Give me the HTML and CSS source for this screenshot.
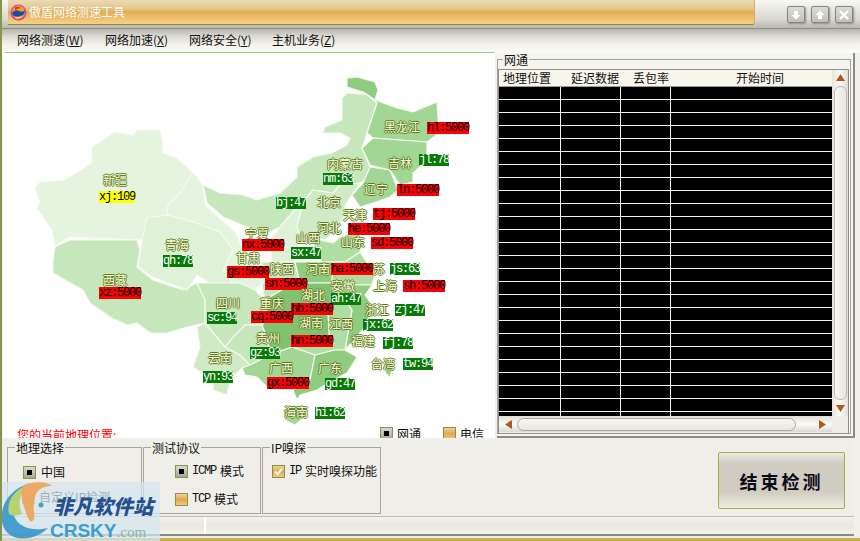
FILE: index.html
```html
<!DOCTYPE html>
<html lang="zh">
<head>
<meta charset="utf-8">
<title>傲盾网络测速工具</title>
<link rel="stylesheet" href="styles.css">
</head>
<body>
<div class="app">
  <header class="titlebar">
    <div class="banner">
      <svg class="app-icon" width="17" height="17" viewBox="0 0 17 17"><circle cx="8.5" cy="8.5" r="8" fill="#d040c0"/><circle cx="8.5" cy="8" r="6.6" fill="#f0a020"/><path d="M2 9q3-4 7-2t6-1q0 3-2 5-5 3-9 1-2-1-2-3z" fill="#1a4fa0"/><path d="M5 3q3-1 6 1-3 0-6 2z" fill="#e03020"/><path d="M4 13q4 1 9-1-3 3-6 3z" fill="#ffe040"/></svg>
      <span class="app-title">傲盾网络测速工具</span>
    </div>
    <div class="win-buttons">
      <button class="win-btn"><svg width="10" height="10" viewBox="0 0 10 10"><path d="M3 1h4v4h2.500L5 9.500.5 5H3z" fill="#fff"/></svg></button>
      <button class="win-btn"><svg width="10" height="10" viewBox="0 0 10 10"><path d="M3 9h4V5h2.500L5 .5.500 5H3z" fill="#fff"/></svg></button>
      <button class="win-btn"><svg width="10" height="10" viewBox="0 0 10 10"><path d="M1 1l8 8M9 1L1 9" stroke="#fff" stroke-width="2.400"/></svg></button>
    </div>
  </header>

  <nav class="menubar">
    <span class="menu-item m1">网络测速(<u>W</u>)</span>
    <span class="menu-item m2">网络加速(<u>X</u>)</span>
    <span class="menu-item m3">网络安全(<u>Y</u>)</span>
    <span class="menu-item m4">主机业务(<u>Z</u>)</span>
  </nav>

  <main class="main">
    <section class="stage">
      <div class="canvas">
        <svg class="map" width="500" height="440" viewBox="0 0 500 440">
          <g stroke="#f4faf0" stroke-width="1.200" stroke-linejoin="round">
            <path class="c1" d="M35 188L40 182 65 180 73 175 92 163 92 147 115 132 133 135 137 130 160 130 163 143 162 153 177 158 192 172 193 182 180 193 168 205 167 215 147 218 145 240 90 238 70 237 55 245 52 230 37 208 40 202z"/>
            <path class="c3" d="M55 247L70 240 87 240 137 240 140 250 137 267 153 280 183 290 197 283 205 300 205 323 187 327 167 333 150 333 137 323 127 325 110 317 90 303 83 290 53 273 53 260z"/>
            <path class="c1" d="M193 172L203 185 205 205 235 232 243 250 250 262 262 262 265 280 255 290 240 283 233 285 223 270 233 250 220 232 193 222 167 215 168 205 180 193z"/>
            <path class="c1b" d="M147 218L167 215 193 222 220 232 233 250 223 270 233 283 210 283 197 275 187 290 153 277 138 267 142 240z"/>
            <path class="c3" d="M342 98L347 93 373 95 377 103 367 133 362 148 370 167 373 177 360 183 340 185 333 193 313 190 303 202 297 207 280 227 268 233 247 227 223 217 207 203 203 185 220 193 243 195 257 200 280 193 297 177 297 167 313 157 332 153 347 145 350 138 340 133 323 133 325 127 342 120 342 107z"/>
            <path class="c6" d="M347 78L357 77 375 82 378 90 375 100 363 92 347 87z"/>
            <path class="c5" d="M363 92L375 100 397 108 413 112 437 102 439 133 427 142 400 140 373 138 367 133 377 103z"/>
            <path class="c5" d="M373 138L400 140 427 142 427 155 422 165 413 173 413 182 400 185 390 170 370 165 362 148z"/>
            <path class="c5" d="M370 167L390 170 398 190 390 197 373 203 360 207 352 195 363 183z"/>
            <path class="c2" d="M333 193L340 185 360 183 352 195 345 205 345 215 335 232 325 240 310 235 300 240 297 225 303 203 313 190z"/>
            <path class="c1b" d="M297 207L303 203 297 225 300 240 295 262 272 262 270 240 280 227z"/>
            <path class="c4" d="M320 240L333 243 340 237 357 233 363 243 360 252 345 262 322 262 310 236z"/>
            <path class="c3" d="M262 262L272 262 295 262 300 283 290 285 265 300 262 285 265 280z"/>
            <path class="c6" d="M295 262L322 262 333 262 332 283 300 283z"/>
            <path class="c4" d="M333 262L345 262 360 252 375 275 372 285 352 285 345 300 335 300 332 283z"/>
            <path class="c6" d="M352 285L372 285 365 295 372 305 367 325 345 350 352 310 345 300z"/>
            <path class="c7" d="M265 300L290 285 300 283 332 283 335 300 328 312 290 315 268 318z"/>
            <path class="c3" d="M197 283L210 283 233 283 240 283 255 290 265 300 262 325 245 325 235 340 225 347 215 335 205 323 205 300z"/>
            <path class="c2" d="M193 367L200 347 197 327 205 323 215 335 225 347 240 355 250 365 242 368 230 380 227 395 213 390 213 380z"/>
            <path class="c3" d="M225 347L235 335 245 325 262 325 268 340 270 355 250 365 240 355z"/>
            <path class="c7" d="M268 318L290 315 328 312 330 345 292 347 270 355 268 340 262 325z"/>
            <path class="c4" d="M328 312L335 300 345 300 352 310 345 350 335 350 315 355 292 347 330 345z"/>
            <path class="c5" d="M242 368L250 365 270 355 292 347 315 355 310 380 293 390 267 387 257 377 245 375z"/>
            <path class="c6" d="M315 355L335 350 345 350 357 357 347 373 333 380 317 390 300 395 297 400 293 390 310 380z"/>
            <path class="c5" d="M283 410L295 405 307 408 307 415 295 425 285 420z"/>
            <path class="c6" d="M385 362L393 362 390 378 385 372z"/>
          </g>
        </svg>

        <span class="name" id="n-xj">新疆</span><span class="tag yellow" id="t-xj">xj:109</span>
        <span class="name" id="n-qh">青海</span><span class="tag green" id="t-qh">qh:78</span>
        <span class="name" id="n-xz">西藏</span><span class="tag red" id="t-xz">xz:5000</span>
        <span class="name" id="n-hl">黑龙江</span><span class="tag red" id="t-hl">hl:5000</span>
        <span class="name" id="n-jl">吉林</span><span class="tag green" id="t-jl">jl:78</span>
        <span class="name" id="n-nm">内蒙古</span><span class="tag green" id="t-nm">nm:63</span>
        <span class="name" id="n-ln">辽宁</span><span class="tag red" id="t-ln">ln:5000</span>
        <span class="name" id="n-bj">北京</span><span class="tag green" id="t-bj">bj:47</span>
        <span class="name" id="n-tj">天津</span><span class="tag red" id="t-tj">tj:5000</span>
        <span class="name" id="n-he">河北</span><span class="tag red" id="t-he">he:5000</span>
        <span class="name" id="n-sd">山东</span><span class="tag red" id="t-sd">sd:5000</span>
        <span class="name" id="n-nx">宁夏</span><span class="tag red" id="t-nx">nx:5000</span>
        <span class="name" id="n-sx">山西</span><span class="tag green" id="t-sx">sx:47</span>
        <span class="name" id="n-gs">甘肃</span><span class="tag red" id="t-gs">gs:5000</span>
        <span class="name" id="n-sn">陕西</span><span class="tag red" id="t-sn">sn:5000</span>
        <span class="name" id="n-ha">河南</span><span class="tag red" id="t-ha">ha:5000</span>
        <span class="name" id="n-js">苏</span><span class="tag green" id="t-js">js:63</span>
        <span class="name" id="n-ah">安徽</span><span class="tag green" id="t-ah">ah:47</span>
        <span class="name" id="n-sh">上海</span><span class="tag red" id="t-sh">sh:5000</span>
        <span class="name" id="n-hb">湖北</span><span class="tag red" id="t-hb">hb:5000</span>
        <span class="name" id="n-sc">四川</span><span class="tag green" id="t-sc">sc:94</span>
        <span class="name" id="n-cq">重庆</span><span class="tag red" id="t-cq">cq:5000</span>
        <span class="name" id="n-zj">浙江</span><span class="tag green" id="t-zj">zj:47</span>
        <span class="name" id="n-hn">湖南</span><span class="tag red" id="t-hn">hn:5000</span>
        <span class="name" id="n-jx">江西</span><span class="tag green" id="t-jx">jx:62</span>
        <span class="name" id="n-fj">福建</span><span class="tag green" id="t-fj">fj:78</span>
        <span class="name" id="n-gz">贵州</span><span class="tag green" id="t-gz">gz:93</span>
        <span class="name" id="n-yn">云南</span><span class="tag green" id="t-yn">yn:93</span>
        <span class="name" id="n-tw">台湾</span><span class="tag green" id="t-tw">tw:94</span>
        <span class="name" id="n-gx">广西</span><span class="tag red" id="t-gx">gx:5000</span>
        <span class="name" id="n-gd">广东</span><span class="tag green" id="t-gd">gd:47</span>
        <span class="name" id="n-hi">海南</span><span class="tag green" id="t-hi">hi:62</span>

        <span class="location">您的当前地理位置:</span>
        <span class="legend-item lg1"><i class="box dot"></i>网通</span>
        <span class="legend-item lg2"><i class="box tan"></i>电信</span>
      </div>
    </section>

    <section class="net">
      <span class="caption net-caption">网通</span>
      <div class="net-inner">
        <div class="table">
          <div class="thead">
            <span class="th th1">地理位置</span>
            <span class="th th2">延迟数据</span>
            <span class="th th3">丢包率</span>
            <span class="th th4">开始时间</span>
          </div>
          <div class="tbody"></div>
        </div>
        <div class="vscroll">
          <svg class="arrow" width="9" height="7" viewBox="0 0 9 7"><path d="M4.500 0L9 7H0z" fill="#b5561c"/></svg>
          <div class="vthumb"></div>
          <svg class="arrow" width="9" height="7" viewBox="0 0 9 7"><path d="M4.500 7L9 0H0z" fill="#b5561c"/></svg>
        </div>
        <div class="hscroll">
          <svg class="arrow" width="7" height="9" viewBox="0 0 7 9"><path d="M0 4.500L7 0V9z" fill="#b5561c"/></svg>
          <div class="hthumb"></div>
          <svg class="arrow" width="7" height="9" viewBox="0 0 7 9"><path d="M7 4.500L0 0V9z" fill="#b5561c"/></svg>
        </div>
      </div>
    </section>
  </main>

  <section class="controls">
    <div class="group g1">
      <span class="caption">地理选择</span>
      <label class="opt o-cn"><i class="box dot"></i>中国</label>
      <label class="opt o-ip"><i class="box tan"></i>自定义IP检测</label>
    </div>
    <div class="group g2">
      <span class="caption">测试协议</span>
      <label class="opt o-icmp"><i class="box dot"></i><span class="mono">ICMP</span>模式</label>
      <label class="opt o-tcp"><i class="box tan"></i><span class="mono">TCP</span>模式</label>
    </div>
    <div class="group g3">
      <span class="caption">IP嗅探</span>
      <label class="opt o-sniff"><i class="box tan check"><svg width="11" height="11" viewBox="0 0 11 11"><path d="M2 5.500l2.500 2.500L9 3" fill="none" stroke="#fff" stroke-width="2"/></svg></i><span class="mono">IP</span>实时嗅探功能</label>
    </div>
    <button class="stop">结束检测</button>
  </section>

  <footer class="status"><div class="status-a"></div><div class="status-b"></div></footer>
  <div class="bottom-strip"></div>

  <div class="watermark">
    <svg class="wm-logo" width="56" height="59" viewBox="0 0 56 59">
      <path d="M2 40C0 24 8 8 30 1 16 8 10 22 14 34 18 44 30 50 48 46 34 60 6 62 2 40z" fill="#2f93c8"/>
      <path d="M9 32C6 20 14 7 30 2 20 10 17 22 22 32 16 34 12 34 9 32z" fill="#b3cf5a"/>
      <path d="M22 5C32-2 48 0 52 4 40 4 32 10 34 30 36 40 30 42 28 36 24 26 20 14 22 5z" fill="#f0a050"/>
      <circle cx="41" cy="23" r="2.500" fill="#2f93c8"/>
    </svg>
    <span class="wm-cn">非凡软件站</span>
    <span class="wm-en">CRSKY<span class="wm-com">.com</span></span>
  </div>
</div>
</body>
</html>
```

FILE: styles.css
```css
* { box-sizing: border-box; }
html, body { margin: 0; padding: 0; }
body {
  width: 860px;
  height: 541px;
  overflow: hidden;
  font-family: "Noto Sans CJK SC", "Liberation Sans", sans-serif;
  font-size: 12px;
  color: #111;
  background: #f0eee9;
}
.app {
  position: relative;
  width: 860px;
  height: 541px;
  display: flex;
  flex-direction: column;
  border-left: 2px solid #84964a;
  overflow: hidden;
  background: #f2f0eb;
}

/* title bar */
.titlebar {
  height: 28px;
  flex: none;
  display: flex;
  justify-content: space-between;
  background: linear-gradient(#f8f8f4, #d8d7d0 70%, #b9b8b0);
  padding-left: 6px;
}
.banner {
  width: 747px;
  height: 25px;
  display: flex;
  align-items: center;
  gap: 2px;
  padding-left: 2px;
  background: linear-gradient(#ebdab8 0, #e5c88c 35%, #dfb050 50%, #eebb68 70%, #fbcd86 100%);
  border-bottom: 1px solid #7e8f3c;
  border-right: 1px solid #d6ae6c;
  border-bottom-right-radius: 3px;
}
.app-icon { flex: none; }
.app-title { color: #fff; margin-left: 0; text-shadow: 0 0 1px #c99d50; line-height: 12px; font-size: 12px; }
.win-buttons { display: flex; gap: 6px; padding: 6px 7px 0 0; }
.win-btn {
  width: 18px;
  height: 17px;
  padding: 0;
  display: flex;
  align-items: center;
  justify-content: center;
  border: 1px solid #86857f;
  border-radius: 2px;
  background: linear-gradient(#dedcd5, #c1bfb8);
  box-shadow: 1px 1px 2px #8e8d88;
}

/* menu bar */
.menubar {
  height: 25px;
  flex: none;
  position: relative;
  background: linear-gradient(#b5b3aa 0, #dcdad2 30%, #f6f5f0 70%, #fafaf7 100%);
  border-top: 1px solid #8d8c85;
}
.menu-item { position: absolute; top: 3px; font-size: 12px; line-height: 16px; white-space: nowrap; }
.m1 { left: 15px; }
.m2 { left: 103px; }
.m3 { left: 187px; }
.m4 { left: 270px; }
.menubar::after {
  content: "";
  position: absolute;
  left: 3px;
  width: 489px;
  bottom: 0;
  height: 1px;
  background: #93d277;
}

/* main row */
.main { height: 386px; flex: none; display: flex; padding-left: 1px; }
.stage {
  position: relative;
  width: 492px;
  height: 385px;
  background: #fff;
  overflow: hidden;
  flex: none;
}
.canvas { position: absolute; left: -3px; top: -53px; width: 500px; height: 500px; }
.map { position: absolute; left: 0; top: 0; }
.c1 { fill: #e5f4de; }
.c1b { fill: #dff1d7; }
.c2 { fill: #cfeac4; }
.c3 { fill: #c6e6bb; }
.c4 { fill: #afdea2; }
.c5 { fill: #a2d695; }
.c6 { fill: #90cc80; }
.c7 { fill: #80c270; }

.name {
  position: absolute;
  font-size: 12px;
  line-height: 12px;
  white-space: nowrap;
  color: #fbfde0;
  text-shadow: 1px 0 0 #5f7a18, -1px 0 0 #5f7a18, 0 1px 0 #5f7a18, 0 -1px 0 #5f7a18;
}
.tag {
  position: absolute;
  height: 12px;
  padding: 0;
  font-family: "Liberation Mono", monospace;
  font-size: 12px;
  letter-spacing: -1.2px;
  line-height: 12px;
  white-space: nowrap;
}
.red { background: #fb0000; color: #000; width: 42px; }
.green { background: #087a08; color: #fff; width: 30px; }
.yellow { background: #ffff00; color: #000; width: 36px; }

#n-xj { left: 103px; top: 174px; } #t-xj { left: 99px; top: 191px; }
#n-qh { left: 165px; top: 239px; } #t-qh { left: 163px; top: 255px; }
#n-xz { left: 103px; top: 274px; } #t-xz { left: 99px; top: 287px; }
#n-hl { left: 384px; top: 121px; } #t-hl { left: 427px; top: 122px; }
#n-jl { left: 388px; top: 157px; } #t-jl { left: 419px; top: 154px; }
#n-nm { left: 327px; top: 158px; } #t-nm { left: 323px; top: 173px; }
#n-ln { left: 364px; top: 183px; } #t-ln { left: 397px; top: 184px; }
#n-bj { left: 317px; top: 196px; } #t-bj { left: 276px; top: 197px; }
#n-tj { left: 343px; top: 209px; } #t-tj { left: 373px; top: 208px; }
#n-he { left: 317px; top: 222px; } #t-he { left: 348px; top: 223px; }
#n-sd { left: 341px; top: 236px; } #t-sd { left: 371px; top: 237px; }
#n-nx { left: 245px; top: 228px; } #t-nx { left: 242px; top: 239px; }
#n-sx { left: 296px; top: 232px; } #t-sx { left: 291px; top: 247px; }
#n-gs { left: 236px; top: 252px; } #t-gs { left: 227px; top: 266px; }
#n-sn { left: 270px; top: 263px; } #t-sn { left: 265px; top: 278px; }
#n-ha { left: 306px; top: 263px; } #t-ha { left: 331px; top: 263px; }
#n-js { left: 373px; top: 263px; } #t-js { left: 390px; top: 263px; }
#n-ah { left: 331px; top: 280px; } #t-ah { left: 331px; top: 293px; }
#n-sh { left: 373px; top: 280px; } #t-sh { left: 403px; top: 280px; }
#n-hb { left: 301px; top: 289px; } #t-hb { left: 291px; top: 303px; }
#n-sc { left: 216px; top: 297px; } #t-sc { left: 207px; top: 312px; }
#n-cq { left: 260px; top: 297px; } #t-cq { left: 251px; top: 311px; }
#n-zj { left: 365px; top: 304px; } #t-zj { left: 395px; top: 304px; }
#n-hn { left: 299px; top: 317px; } #t-hn { left: 291px; top: 335px; }
#n-jx { left: 329px; top: 318px; } #t-jx { left: 363px; top: 319px; }
#n-fj { left: 351px; top: 335px; } #t-fj { left: 383px; top: 337px; }
#n-gz { left: 256px; top: 332px; } #t-gz { left: 250px; top: 347px; }
#n-yn { left: 208px; top: 352px; } #t-yn { left: 203px; top: 371px; }
#n-tw { left: 371px; top: 358px; } #t-tw { left: 403px; top: 358px; }
#n-gx { left: 269px; top: 362px; } #t-gx { left: 267px; top: 377px; }
#n-gd { left: 318px; top: 362px; } #t-gd { left: 325px; top: 378px; }
#n-hi { left: 284px; top: 406px; } #t-hi { left: 315px; top: 407px; }

.location { position: absolute; left: 17px; top: 428px; color: #f00; line-height: 13px; white-space: nowrap; }
.legend-item { position: absolute; top: 427px; display: flex; align-items: center; gap: 4px; line-height: 13px; white-space: nowrap; }
.lg1 { left: 380px; }
.lg2 { left: 443px; }

/* option boxes */
.box {
  display: flex;
  align-items: center;
  justify-content: center;
  flex: none;
  width: 13px;
  height: 13px;
  border: 1px solid #84964a;
}
.dot { background: linear-gradient(#d9d8d2, #a5a49d); }
.dot::before { content: ""; width: 5px; height: 5px; background: #000; }
.tan { background: linear-gradient(#f3d196, #e2a850 50%, #f6c47d); }

/* network table */
.net {
  position: relative;
  width: 358px;
  height: 385px;
  margin-left: 2px;
  padding: 6px 0 0 0;
  background: #f5f4ef;
  border-right: 2px solid #8a8a86;
  border-bottom: 2px solid #8a8a86;
}
.net::before {
  content: "";
  position: absolute;
  left: 0;
  top: 6px;
  right: 2px;
  bottom: 2px;
  border: 1px solid #a3a29c;
}
.caption {
  position: absolute;
  top: -7px;
  left: 7px;
  padding: 0 1px;
  line-height: 13px;
  background: #f2f0eb;
  white-space: nowrap;
}
.net-caption { top: 0; left: 6px; background: #f5f4ef; z-index: 1; }
.net-inner {
  position: relative;
  margin: 10px 0 0 1px;
  width: 351px;
  height: 365px;
  display: grid;
  grid-template-columns: 333px 16px;
  grid-template-rows: 346px 16px;
  border: 1px solid #8f8e88;
  background: #efede7;
}
.table { display: flex; flex-direction: column; }
.thead {
  height: 17px;
  flex: none;
  position: relative;
  background: #f8f5ea;
  border-bottom: 1px solid #9a9993;
}
.th { position: absolute; top: 1px; line-height: 14px; white-space: nowrap; }
.th1 { left: 4px; }
.th2 { left: 72px; }
.th3 { left: 134px; }
.th4 { left: 237px; }
.tbody {
  flex: 1;
  background-color: #000;
  background-image:
    linear-gradient(#f2f2f2, #f2f2f2),
    linear-gradient(#f2f2f2, #f2f2f2),
    linear-gradient(#f2f2f2, #f2f2f2),
    repeating-linear-gradient(#000 0, #000 12px, #f2f2f2 12px, #f2f2f2 13px);
  background-size: 1px 100%, 1px 100%, 1px 100%, 100% 100%;
  background-position: 61px 0, 121px 0, 171px 0, 0 0;
  background-repeat: no-repeat;
}
.vscroll {
  display: flex;
  flex-direction: column;
  align-items: center;
  padding: 4px 0;
  gap: 5px;
  background: linear-gradient(90deg, #e6e3da, #fbfaf7 50%, #e0ddd4);
}
.vthumb {
  flex: 1;
  width: 13px;
  border: 1px solid #bdbbb3;
  border-radius: 6px;
  background: linear-gradient(90deg, #f8f6f1, #e9e6de);
}
.hscroll {
  display: flex;
  align-items: center;
  padding: 0 6px;
  gap: 5px;
  background: linear-gradient(#e0ddd4, #fbfaf7 50%, #dcd9d0);
}
.hthumb {
  flex: 1;
  height: 13px;
  margin-right: 18px;
  border: 1px solid #a9a8a0;
  border-radius: 7px;
  background: linear-gradient(#f8f6f1, #e9e6de);
}

/* controls */
.controls {
  position: relative;
  height: 78px;
  flex: none;
  width: 852px;
  display: flex;
  align-items: flex-start;
  gap: 1px;
  padding: 8px 0 0 5px;
  background: #f0eee9;
  border-bottom: 1px solid #bdbcb5;
}
.group {
  position: relative;
  height: 67px;
  border: 1px solid #a5a49e;
  flex: none;
}
.g1 { width: 135px; }
.g2 { width: 118px; }
.g3 { width: 119px; }
.opt { position: absolute; display: flex; align-items: center; gap: 4px; line-height: 14px; white-space: nowrap; }
.o-cn { left: 15px; top: 17px; gap: 5px; }
.o-ip { left: 14px; top: 42px; }
.o-icmp { left: 31px; top: 16px; }
.o-tcp { left: 31px; top: 44px; }
.o-sniff { left: 9px; top: 16px; }
.mono { font-family: "Liberation Mono", monospace; font-size: 12px; letter-spacing: -1.2px; }
.check { padding: 0; }
.stop {
  position: absolute;
  left: 716px;
  top: 13px;
  width: 127px;
  height: 57px;
  padding: 0;
  border: 1px solid #9db23f;
  border-radius: 2px;
  background: linear-gradient(#ebe9e2 0, #d0ccc2 20%, #d0ccc2 70%, #eeebe0 100%);
  font-family: "Noto Sans CJK SC", sans-serif;
  font-size: 18px;
  font-weight: 700;
  letter-spacing: 3px;
  color: #0a0a14;
}

/* status */
.status {
  height: 19px;
  flex: none;
  width: 852px;
  display: flex;
  background: linear-gradient(#f2f1ea, #e9e8df 50%, #f3f2ec);
  border-bottom: 2px solid #8a8a86;
}
.status-a { width: 204px; border-right: 2px solid #fff; }
.status-b { flex: 1; }
.bottom-strip {
  flex: 1;
  background: linear-gradient(#efeee9 40%, #cfae55 40%);
}

/* watermark */
.watermark {
  position: absolute;
  left: -2px;
  top: 482px;
  width: 160px;
  height: 59px;
  background: rgba(214, 230, 240, 0.72);
}
.wm-logo { position: absolute; left: 0; top: 0; opacity: .85; }
.wm-cn {
  position: absolute;
  left: 53px;
  top: 12px;
  font-size: 20px;
  line-height: 24px;
  font-weight: 900;
  font-style: italic;
  color: #23508f;
  white-space: nowrap;
}
.wm-en {
  position: absolute;
  left: 50px;
  top: 39px;
  font-family: "Liberation Sans", sans-serif;
  font-size: 19px;
  line-height: 20px;
  font-weight: 700;
  color: #3b9dd0;
  white-space: nowrap;
}
.wm-com {
  font-family: "Liberation Serif", serif;
  font-size: 15px;
  font-weight: 400;
  color: #7fb8a0;
}
```
